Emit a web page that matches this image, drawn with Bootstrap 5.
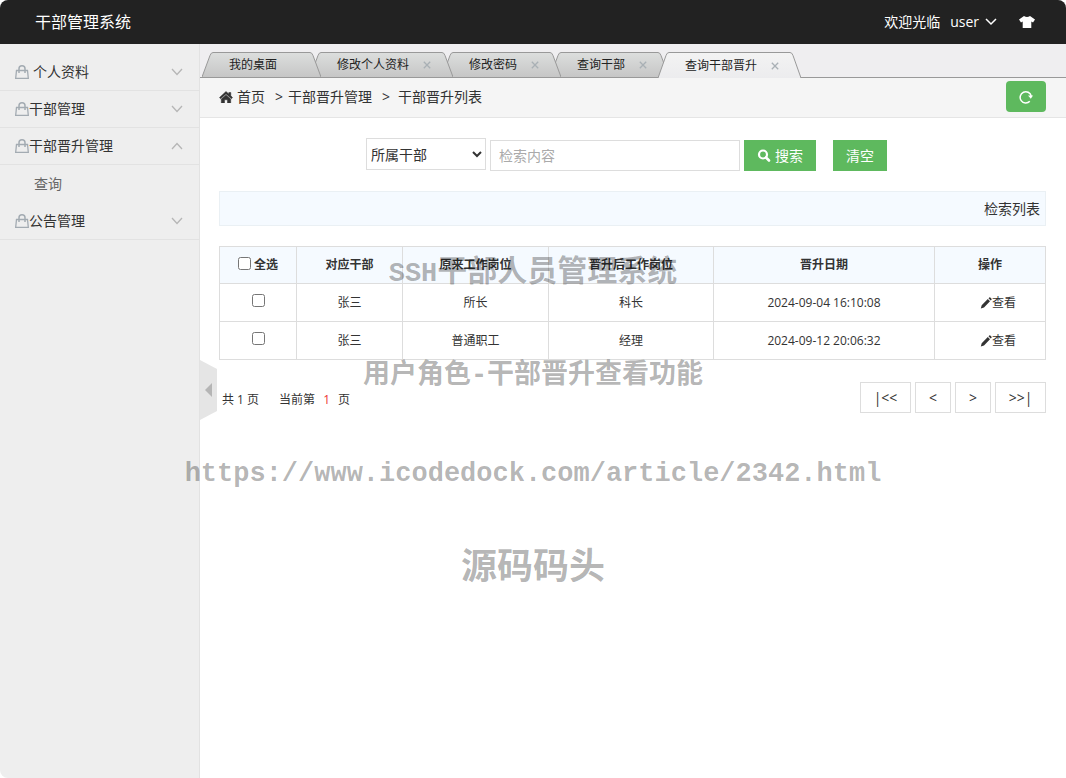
<!DOCTYPE html>
<html lang="zh-CN">
<head>
<meta charset="utf-8">
<meta name="viewport" content="width=device-width, initial-scale=1">
<title>干部管理系统</title>
<link href="https://cdn.jsdelivr.net/npm/bootstrap@5.3.0/dist/css/bootstrap.min.css" rel="stylesheet">
<style>
  body { font-family: "Open Sans", "Noto Sans CJK SC", sans-serif; font-size: 14px; line-height: 20px; color: #333; background: #fff; }
  a { color: inherit; text-decoration: none; }
  svg { flex: none; display: block; }
  .shell { border-radius: 8px; overflow: hidden; }
  .topbar { background: #222; color: #fff; height: 44px; padding: 0 31px 0 35px; }
  .topbar h1 { font-size: 16px; line-height: 24px; font-weight: 400; }
  .user-link { margin-left: 10px; gap: 6px; }
  .skin-link { margin-left: 22px; }
  .side { width: 200px; flex: none; background: #eee; border-right: 1px solid #e2e2e2; padding-top: 10px; }
  .side-head { height: 37px; padding: 0 16px 0 15px; border: 0; border-bottom: 1px solid #e2e2e2; background: none; color: #333; text-align: left; }
  .side-head svg.lock { color: #a3abb2; }
  .side-head svg.arrow { color: #b6b6b6; }
  .side-sub { height: 38px; padding-left: 34px; color: #666; }
  .tabbar { height: 34px; background: #efeef0; border-bottom: 1px solid #999; padding-left: 2px; }
  .tab-item { height: 25px; margin-right: -11px; position: relative; font-size: 12px; color: #222; }
  .tab-item:nth-child(1) { z-index: 4; }
  .tab-item:nth-child(2) { z-index: 3; }
  .tab-item:nth-child(3) { z-index: 2; }
  .tab-item:nth-child(4) { z-index: 1; }
  .tab-item.current { z-index: 5; height: 26px; margin-bottom: -1px; }
  .tab-mid { border-top: 1px solid #999; background: linear-gradient(#dcdedd, #c6c6c6); padding: 0 13px 0 16px; }
  .current .tab-mid { background: linear-gradient(#f3f3f3, #ececee); }
  .tab-x { width: 20px; height: 20px; padding: 0; border: 0; background: none; color: #a9b0b5; margin: 0 -8px 0 8px; }
  .tab-mid.pad { padding-right: 33px; }
  .crumbs { height: 40px; background: #f5f5f5; border-bottom: 1px solid #e5e5e5; padding: 0 20px 2px 19px; }
  .crumbs .sep { margin: 0 5px 0 10px; }
  .btn-green { background: #5eb95e; color: #fff; border: 0; border-radius: 0; height: 31px; font-size: 14px; line-height: 20px; padding: 0 13px; }
  .btn-green:hover { background: #52a552; color: #fff; }
  .btn-reload { width: 40px; border-radius: 4px; padding: 0; }
  .btn-clear { margin-left: 13px; }
  .page { padding: 20px 20px 20px 19px; }
  .search { padding-right: 12px; gap: 4px; height: 33px; }
  .search select { width: 120px; height: 32px; border: 1px solid #ddd; background: #fff; color: #333; padding: 0; }
  .search input { width: 250px; height: 31px; border: 1px solid #ddd; border-radius: 0; padding: 0 8px; font-size: 14px; }
  .search input::placeholder { color: #aaa; }
  .listbar { height: 35px; margin-top: 20px; padding: 0 5px; background: #f5faff; border: 1px solid #eaf0f4; }
  .grid { table-layout: fixed; margin: 20px 0 0; font-size: 12px; text-align: center; border-color: #ddd; color: #333; }
  .grid > :not(caption) > * > * { padding: 0 8px; height: 38px; border: 1px solid #ddd; color: inherit; vertical-align: middle; }
  .grid > thead > tr > th { height: 37px; background: #f5faff; }
  .grid input { width: 13px; height: 13px; margin: 0; display: inline-block; vertical-align: -1px; }
  .grid td input { vertical-align: 0; }
  .pager { margin-top: 22px; font-size: 12px; padding-left: 3px; }
  .pager button { min-width: 36px; height: 31px; border: 1px solid #ddd; background: #fff; color: #333; padding: 0 12px; font-size: 14px; }
  .pager .wide { width: 51px; padding: 0; }
  .pager .now { color: #e33; }
  .fold { position: absolute; left: 200px; top: 50%; margin-top: -51px; padding: 0; border: 0; background: none; }
  .stamp { position: absolute; left: 0; right: 0; top: 0; padding-top: 246px; color: rgba(0, 0, 0, .3); font-weight: 700; pointer-events: none; z-index: 10; text-align: center; }
  .stamp p { margin: 0; font-family: "Noto Sans CJK SC", sans-serif; }
  .stamp .latin { font-family: "Liberation Mono", monospace; font-size: 27px; }
  .s1 { font-size: 30px; line-height: 44px; }
  .stamp .s2 { font-size: 27px; line-height: 40px; margin-top: 56px; }
  .stamp .s3 { line-height: 40px; margin-top: 58px; }
  .stamp .s4 { font-size: 36px; line-height: 52px; margin-top: 42px; }
</style>
</head>
<body>
<svg width="0" height="0" class="position-absolute" aria-hidden="true">
  <defs>
    <linearGradient id="tabFill" x1="0" y1="0" x2="0" y2="1"><stop offset="0" stop-color="#dcdedd"/><stop offset="1" stop-color="#c6c6c6"/></linearGradient>
    <linearGradient id="tabFillOn" x1="0" y1="0" x2="0" y2="1"><stop offset="0" stop-color="#f3f3f3"/><stop offset="1" stop-color="#ececee"/></linearGradient>
    <symbol id="lock" viewBox="0 0 14 14"><path d="M1.500 5.500h11l.8 7.800H.7z" fill="none" stroke="currentColor" stroke-width="1.300"/><path d="M4 8V3.800a3 3 0 0 1 6 0V8" fill="none" stroke="currentColor" stroke-width="1.500"/></symbol>
    <symbol id="down" viewBox="0 0 12 8"><path d="M1 1l5 5.500 5-5.500" fill="none" stroke="currentColor" stroke-width="1.300"/></symbol>
    <symbol id="up" viewBox="0 0 12 8"><path d="M1 7l5-5.500L11 7" fill="none" stroke="currentColor" stroke-width="1.300"/></symbol>
    <symbol id="close" viewBox="0 0 8 8"><path d="M.8 .8l6.400 6.400M7.200 .8L.8 7.200" fill="none" stroke="currentColor" stroke-width="1.300"/></symbol>
    <symbol id="pen" viewBox="0 0 12 12"><path d="M.8 11.500l.9-3.300L7.800 2l2.200 2.200-6 6.300zM8.500 1.300l.8-.8q.5-.4 1 0l1.200 1.200q.4.500 0 1l-.8.800z" fill="currentColor"/></symbol>
    <symbol id="tabL" viewBox="0 0 11 25"><path d="M0 25L8 3.500Q9 .5 11 .5V25z" fill="url(#tabFill)"/><path d="M0 25L8 3.500Q9 .5 11 .5" fill="none" stroke="#999"/></symbol>
    <symbol id="tabR" viewBox="0 0 11 25"><path d="M11 25L3 3.500Q2 .5 0 .5V25z" fill="url(#tabFill)"/><path d="M11 25L3 3.500Q2 .5 0 .5" fill="none" stroke="#999"/></symbol>
    <symbol id="tabLOn" viewBox="0 0 11 26"><path d="M0 26L8 3.500Q9 .5 11 .5V26z" fill="url(#tabFillOn)"/><path d="M0 26L8 3.500Q9 .5 11 .5" fill="none" stroke="#999"/></symbol>
    <symbol id="tabROn" viewBox="0 0 11 26"><path d="M11 26L3 3.500Q2 .5 0 .5V26z" fill="url(#tabFillOn)"/><path d="M11 26L3 3.500Q2 .5 0 .5" fill="none" stroke="#999"/></symbol>
  </defs>
</svg>

<div class="shell d-flex flex-column min-vh-100 position-relative">
  <header class="topbar d-flex align-items-center justify-content-between">
    <h1 class="m-0">干部管理系统</h1>
    <div class="d-flex align-items-center">
      <span>欢迎光临</span>
      <a href="#" class="user-link d-flex align-items-center">user <svg width="12" height="8"><path d="M1 1l5 5 5-5" fill="none" stroke="#fff" stroke-width="1.5"/></svg></a>
      <a href="#" class="skin-link" aria-label="换肤"><svg width="16" height="12" viewBox="0 0 16 12"><path d="M5 0q3 2 6 0l5 3.500-2 3-1.700-1V12H3.700V5.500L2 6.500l-2-3z" fill="#fff"/></svg></a>
    </div>
  </header>

  <div class="d-flex flex-grow-1 position-relative">
    <nav class="side d-flex flex-column">
      <button type="button" class="side-head d-flex align-items-center"><svg class="lock" width="14" height="14"><use href="#lock"/></svg><span class="flex-grow-1 ps-1">个人资料</span><svg class="arrow" width="12" height="8"><use href="#down"/></svg></button>
      <button type="button" class="side-head d-flex align-items-center"><svg class="lock" width="14" height="14"><use href="#lock"/></svg><span class="flex-grow-1">干部管理</span><svg class="arrow" width="12" height="8"><use href="#down"/></svg></button>
      <button type="button" class="side-head d-flex align-items-center"><svg class="lock" width="14" height="14"><use href="#lock"/></svg><span class="flex-grow-1">干部晋升管理</span><svg class="arrow" width="12" height="8"><use href="#up"/></svg></button>
      <a href="#" class="side-sub d-flex align-items-center">查询</a>
      <button type="button" class="side-head d-flex align-items-center"><svg class="lock" width="14" height="14"><use href="#lock"/></svg><span class="flex-grow-1">公告管理</span><svg class="arrow" width="12" height="8"><use href="#down"/></svg></button>
    </nav>

    <main class="flex-grow-1">
      <div class="tabbar d-flex align-items-end">
        <div class="tab-item d-flex"><svg width="11" height="25"><use href="#tabL"/></svg><div class="tab-mid pad d-flex align-items-center"><a href="#">我的桌面</a></div><svg width="11" height="25"><use href="#tabR"/></svg></div>
        <div class="tab-item d-flex"><svg width="11" height="25"><use href="#tabL"/></svg><div class="tab-mid d-flex align-items-center"><a href="#">修改个人资料</a><button type="button" class="tab-x d-flex align-items-center justify-content-center" aria-label="关闭"><svg width="8" height="8"><use href="#close"/></svg></button></div><svg width="11" height="25"><use href="#tabR"/></svg></div>
        <div class="tab-item d-flex"><svg width="11" height="25"><use href="#tabL"/></svg><div class="tab-mid d-flex align-items-center"><a href="#">修改密码</a><button type="button" class="tab-x d-flex align-items-center justify-content-center" aria-label="关闭"><svg width="8" height="8"><use href="#close"/></svg></button></div><svg width="11" height="25"><use href="#tabR"/></svg></div>
        <div class="tab-item d-flex"><svg width="11" height="25"><use href="#tabL"/></svg><div class="tab-mid d-flex align-items-center"><a href="#">查询干部</a><button type="button" class="tab-x d-flex align-items-center justify-content-center" aria-label="关闭"><svg width="8" height="8"><use href="#close"/></svg></button></div><svg width="11" height="25"><use href="#tabR"/></svg></div>
        <div class="tab-item current d-flex"><svg width="11" height="26"><use href="#tabLOn"/></svg><div class="tab-mid d-flex align-items-center"><a href="#">查询干部晋升</a><button type="button" class="tab-x d-flex align-items-center justify-content-center" aria-label="关闭"><svg width="8" height="8"><use href="#close"/></svg></button></div><svg width="11" height="26"><use href="#tabROn"/></svg></div>
      </div>

      <div class="crumbs d-flex align-items-center justify-content-between">
        <div class="d-flex align-items-center">
          <svg width="14" height="12" viewBox="0 0 14 12"><path d="M7 .5l2.800 2.500V1.500h2v3.300L13.500 6.500l-1 1.200L7 2.900 1.500 7.700l-1-1.200zM7 4l4.700 4v4H8.500V8.800h-3V12H2.300V8z" fill="#333" stroke="#333" stroke-width=".5"/></svg>
          <a href="#" class="ms-1">首页</a><span class="sep">&gt;</span><span>干部晋升管理</span><span class="sep me-2">&gt;</span><span>干部晋升列表</span>
        </div>
        <button type="button" class="btn-green btn-reload d-flex align-items-center justify-content-center" aria-label="刷新"><svg width="14" height="14" viewBox="0 0 14 14"><path d="M10.800 11.200A5.600 5.600 0 1 1 12.200 6" fill="none" stroke="#fff" stroke-width="1.500"/><path d="M9 5.500h5L11.800 8.700z" fill="#fff"/></svg></button>
      </div>

      <div class="page">
        <form class="search d-flex justify-content-center align-items-end" onsubmit="return false">
          <select class="align-self-start" aria-label="检索字段"><option>所属干部</option></select>
          <input type="text" aria-label="检索内容" placeholder="检索内容">
          <button type="submit" class="btn-green d-flex align-items-center gap-1"><svg width="14" height="13" viewBox="0 0 14 13"><circle cx="6" cy="5.500" r="4" fill="none" stroke="#fff" stroke-width="2.200"/><path d="M9 8.500l3 3" stroke="#fff" stroke-width="2.600" stroke-linecap="round"/></svg>搜索</button>
          <button type="reset" class="btn-green btn-clear">清空</button>
        </form>

        <div class="listbar d-flex align-items-center justify-content-end">检索列表</div>

        <table class="table grid">
          <colgroup><col width="77"><col width="106"><col width="146"><col width="165"><col width="221"><col width="111"></colgroup>
          <thead>
            <tr><th><label><input type="checkbox"> 全选</label></th><th>对应干部</th><th>原来工作岗位</th><th>晋升后工作岗位</th><th>晋升日期</th><th>操作</th></tr>
          </thead>
          <tbody>
            <tr><td><input type="checkbox" aria-label="选择第1行"></td><td>张三</td><td>所长</td><td>科长</td><td>2024-09-04 16:10:08</td><td><a href="#" class="d-flex align-items-center justify-content-center ps-3"><svg width="12" height="12"><use href="#pen"/></svg>查看</a></td></tr>
            <tr><td><input type="checkbox" aria-label="选择第2行"></td><td>张三</td><td>普通职工</td><td>经理</td><td>2024-09-12 20:06:32</td><td><a href="#" class="d-flex align-items-center justify-content-center ps-3"><svg width="12" height="12"><use href="#pen"/></svg>查看</a></td></tr>
          </tbody>
        </table>

        <div class="pager d-flex align-items-center justify-content-between">
          <div class="pt-1"><span class="me-1">共 1 页</span><span class="ms-3">当前第</span><span class="now mx-2">1</span><span>页</span></div>
          <div class="d-flex gap-1"><button type="button" class="wide">|&lt;&lt;</button><button type="button">&lt;</button><button type="button">&gt;</button><button type="button" class="wide">&gt;&gt;|</button></div>
        </div>
      </div>
    </main>

    <button type="button" class="fold" aria-label="收起菜单"><svg width="17" height="60" viewBox="0 0 17 60"><path d="M0 0l17 9v42L0 60z" fill="#e5e5e5"/><path d="M12 23v14l-7-7z" fill="#b5b5b5"/></svg></button>
  </div>

  <div class="stamp">
    <p class="s1"><span class="latin">SSH</span>干部人员管理系统</p>
    <p class="s2">用户角色<span class="latin">-</span>干部晋升查看功能</p>
    <p class="s3"><span class="latin">https://www.icodedock.com/article/2342.html</span></p>
    <p class="s4">源码码头</p>
  </div>
</div>
<script src="https://cdn.jsdelivr.net/npm/bootstrap@5.3.0/dist/js/bootstrap.bundle.min.js"></script>
</body>
</html>
